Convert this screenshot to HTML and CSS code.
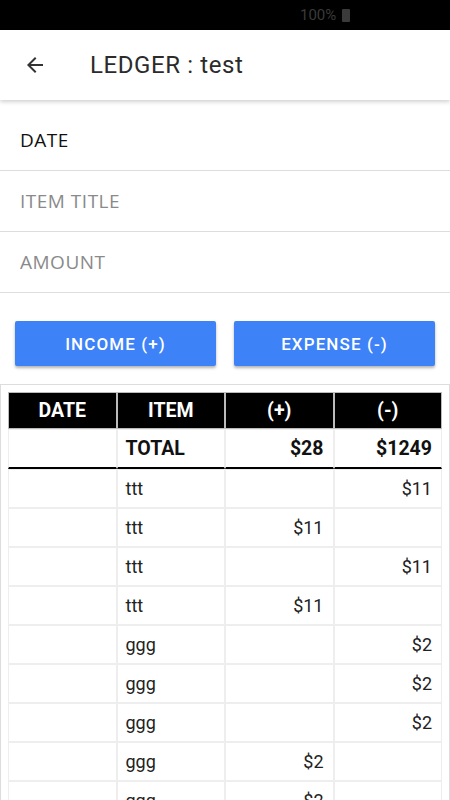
FILE: index.html
```html
<!DOCTYPE html>
<html lang="en">
<head>
  <meta charset="UTF-8" />
  <meta name="viewport" content="width=device-width, initial-scale=1.0"/>
  <title>Ledger</title>
  <link rel="stylesheet" href="styles.css">
</head>
<body>

  <div class="status-bar">
    <span class="battery-text">100%</span>
    <span class="battery"></span>
  </div>

  <header class="app-bar">
    <svg class="back" width="24" height="24" viewBox="0 0 24 24">
      <path d="M20 11H7.83l5.59-5.59L12 4l-8 8 8 8 1.41-1.41L7.83 13H20v-2z" fill="#333"/>
    </svg>
    <h1>LEDGER : test</h1>
  </header>

  <form class="entry">
    <input type="text" name="date" value="DATE" readonly>
    <input type="text" name="title" placeholder="ITEM TITLE">
    <input type="number" name="amount" placeholder="AMOUNT">

    <div class="actions">
      <button type="button" class="btn">INCOME (+)</button>
      <button type="button" class="btn">EXPENSE (-)</button>
    </div>
  </form>

  <div class="ledger">
    <table>
      <thead>
        <tr>
          <th>DATE</th>
          <th>ITEM</th>
          <th>(+)</th>
          <th>(-)</th>
        </tr>
      </thead>
      <tbody>
        <tr class="total">
          <td></td>
          <td>TOTAL</td>
          <td class="num">$28</td>
          <td class="num">$1249</td>
        </tr>
        <tr><td></td><td>ttt</td><td class="num"></td><td class="num">$11</td></tr>
        <tr><td></td><td>ttt</td><td class="num">$11</td><td class="num"></td></tr>
        <tr><td></td><td>ttt</td><td class="num"></td><td class="num">$11</td></tr>
        <tr><td></td><td>ttt</td><td class="num">$11</td><td class="num"></td></tr>
        <tr><td></td><td>ggg</td><td class="num"></td><td class="num">$2</td></tr>
        <tr><td></td><td>ggg</td><td class="num"></td><td class="num">$2</td></tr>
        <tr><td></td><td>ggg</td><td class="num"></td><td class="num">$2</td></tr>
        <tr><td></td><td>ggg</td><td class="num">$2</td><td class="num"></td></tr>
        <tr><td></td><td>ggg</td><td class="num">$2</td><td class="num"></td></tr>
      </tbody>
    </table>
  </div>

</body>
</html>
```

FILE: styles.css
```css
body {
  margin: 0;
  font-family: Roboto, "Liberation Sans", sans-serif;
  background: white;
  color: #222;
}
.status-bar {
  height: 30px;
  background: #000;
  display: flex;
  align-items: center;
  padding-left: 300px;
}
.battery-text {
  color: #3a3a3a;
  font-size: 15px;
}
.battery {
  width: 8px;
  height: 13px;
  margin-left: 6px;
  margin-top: 1px;
  background: #3a3a3a;
  border-radius: 1px;
}
.app-bar {
  height: 70px;
  display: flex;
  align-items: center;
  padding-left: 23px;
  box-shadow: 0 2px 4px rgba(0, 0, 0, 0.18);
  position: relative;
}
.app-bar h1 {
  margin: 0 0 0 43px;
  font-size: 24px;
  letter-spacing: 0.6px;
  font-weight: normal;
  color: #2b2b2b;
}
.entry {
  padding-top: 10px;
}
.entry input {
  display: block;
  width: 100%;
  box-sizing: border-box;
  height: 61px;
  padding: 0 20px;
  border: none;
  border-bottom: 1px solid #ddd;
  font-family: "Open Sans", sans-serif;
  font-size: 19px;
  letter-spacing: 0.5px;
  color: #111;
  outline: none;
  background: white;
}
.entry input::placeholder {
  color: #8a8a8a;
}
.actions {
  display: flex;
  gap: 18px;
  padding: 28px 15px 18px;
}
.btn {
  flex: 1;
  height: 45px;
  background-color: #3d82f6;
  color: white;
  font-family: Roboto, sans-serif;
  font-weight: 500;
  font-size: 17px;
  letter-spacing: 1.1px;
  border: none;
  border-radius: 2px;
  box-shadow: 0 2px 3px rgba(0, 0, 0, 0.3);
  cursor: pointer;
}
.ledger {
  border: 1px solid #ddd;
  padding: 7px;
}
.ledger table {
  width: 100%;
  border-collapse: separate;
  border-spacing: 0;
  table-layout: fixed;
  font-size: 18px;
}
.ledger th {
  background: #000;
  color: white;
  font-weight: bold;
  font-size: 19.5px;
  border: 1px solid #bbb;
  padding: 7px 8px;
  line-height: 21px;
}
.ledger td {
  border: 1px solid #eee;
  padding: 8px;
  line-height: 21px;
  height: 21px;
}
.ledger td.num {
  text-align: right;
  padding-right: 9px;
}
.ledger .total td {
  font-weight: bold;
  font-size: 19.5px;
  color: #111;
  padding: 8px 9px 8px 8px;
  border-bottom: 2px solid #000;
}
```
